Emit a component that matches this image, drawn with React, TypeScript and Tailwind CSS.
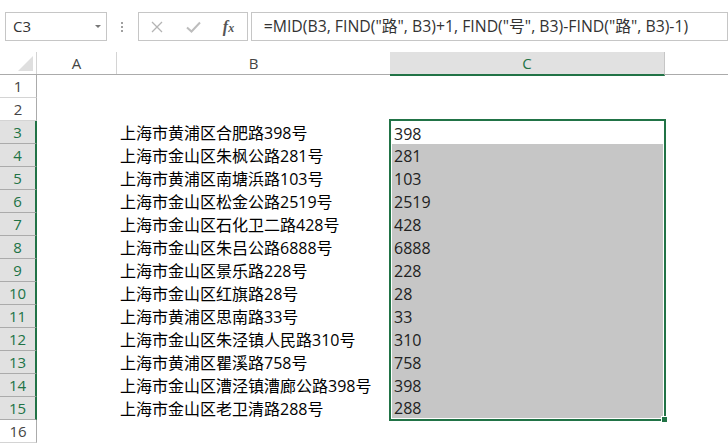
import React from "react";

const rows: { b: string; c: string }[] = [
  { b: "上海市黄浦区合肥路398号", c: "398" },
  { b: "上海市金山区朱枫公路281号", c: "281" },
  { b: "上海市黄浦区南塘浜路103号", c: "103" },
  { b: "上海市金山区松金公路2519号", c: "2519" },
  { b: "上海市金山区石化卫二路428号", c: "428" },
  { b: "上海市金山区朱吕公路6888号", c: "6888" },
  { b: "上海市金山区景乐路228号", c: "228" },
  { b: "上海市金山区红旗路28号", c: "28" },
  { b: "上海市黄浦区思南路33号", c: "33" },
  { b: "上海市金山区朱泾镇人民路310号", c: "310" },
  { b: "上海市黄浦区瞿溪路758号", c: "758" },
  { b: "上海市金山区漕泾镇漕廊公路398号", c: "398" },
  { b: "上海市金山区老卫清路288号", c: "288" },
];

const font = { fontFamily: '"Open Sans", "Noto Sans CJK SC", sans-serif' };

function RowHeader({ n, selected }: { n: number; selected: boolean }) {
  return (
    <div
      className={`w-[37px] h-full flex items-center justify-center border-b border-[#d4d4d4] text-[15px] ${
        selected
          ? "bg-[#e1e1e1] border-r-2 border-r-[#217346] text-[#217346] border-b-[#ababab]"
          : "bg-white border-r border-r-[#ababab] text-[#444]"
      }`}
    >
      {n}
    </div>
  );
}

export default function App() {
  const all = Array.from({ length: 16 }, (_, i) => i + 1);
  return (
    <div
      className="relative w-[728px] h-[445px] overflow-hidden bg-white text-[#222]"
      style={font}
    >
      {/* Formula bar */}
      <div className="flex items-center h-[52px] pt-[1px] pl-[5px]">
        <div className="w-[102px] h-[29px] border border-[#c6c6c6] flex items-center justify-between pl-[7px] pr-[5px] text-[15px] text-[#333]">
          <span>C3</span>
          <span className="w-0 h-0 border-l-[3px] border-r-[3px] border-t-[3px] border-l-transparent border-r-transparent border-t-[#777]" />
        </div>
        <div className="w-[31px] flex flex-col items-center gap-[2px]">
          <span className="w-[2px] h-[2px] bg-[#a0a0a0]" />
          <span className="w-[2px] h-[2px] bg-[#a0a0a0]" />
          <span className="w-[2px] h-[2px] bg-[#a0a0a0]" />
        </div>
        <div className="w-[110px] h-[29px] border border-[#c6c6c6] flex items-center">
          <svg width="12" height="12" viewBox="0 0 12 12" className="ml-[12px]">
            <path d="M1 1 L11 11 M11 1 L1 11" stroke="#b4b4b4" strokeWidth="1.3" fill="none" />
          </svg>
          <svg width="15" height="12" viewBox="0 0 15 12" className="ml-[23px]">
            <path d="M1 6.5 L5.5 10.5 L14 1.5" stroke="#bdbdbd" strokeWidth="2" fill="none" />
          </svg>
          <span
            className="ml-[22px] text-[16px] italic font-bold text-[#555] leading-none"
            style={{ fontFamily: '"Liberation Serif", serif' }}
          >
            f<span className="text-[12px]">x</span>
          </span>
        </div>
        <div className="ml-[3px] w-[478px] h-[29px] border border-[#c6c6c6] flex items-center pl-[12px] text-[15.8px] text-[#333] whitespace-nowrap">
          =MID(B3, FIND("路", B3)+1, FIND("号", B3)-FIND("路", B3)-1)
        </div>
      </div>

      {/* Column headers */}
      <div className="flex h-[23px] border-b border-[#ababab] text-[15px] text-[#444]">
        <div className="w-[37px] h-full border-r border-[#d4d4d4] relative">
          <svg width="16" height="16" viewBox="0 0 16 16" className="absolute left-[18px] top-[4px]">
            <path d="M15 0 L15 15 L0 15 Z" fill="#dfdfdf" />
          </svg>
        </div>
        <div className="w-[80px] h-full flex items-center justify-center border-r border-[#d4d4d4]">A</div>
        <div className="w-[273px] h-full flex items-center justify-center">B</div>
        <div className="w-[275px] h-[24px] flex items-center justify-center bg-[#e1e1e1] border-r border-[#c6c6c6] border-b-2 border-b-[#217346] text-[#217346]">
          C
        </div>
        <div className="flex-1" />
      </div>

      {/* Rows */}
      {all.map((n) => {
        const r = n >= 3 && n <= 15 ? rows[n - 3] : null;
        const sel = n >= 3 && n <= 15;
        return (
          <div key={n} className="flex h-[23px] text-[16px]">
            <RowHeader n={n} selected={sel} />
            <div className="w-[80px]" />
            <div className="w-[273px] flex items-center pl-[3px] text-black whitespace-nowrap">
              {r?.b}
            </div>
            <div className="w-[274px] h-full">
              {r && n === 3 && (
                <div className="h-full flex items-center pl-[4px] pt-[2px]">{r.c}</div>
              )}
              {r && n > 3 && (
                <div className={`h-full pl-[2px] pr-[1px] ${n === 15 ? "pb-[2px]" : ""}`}>
                  <div className="h-full bg-[#c6c6c6] flex items-center pl-[2px]">{r.c}</div>
                </div>
              )}
            </div>
          </div>
        );
      })}

      {/* Selection outline */}
      <div className="absolute left-[389px] top-[119px] w-[277px] h-[302px] border-2 border-[#217346] pointer-events-none" />
      <div className="absolute left-[661px] top-[416px] w-[7px] h-[7px] bg-[#217346] border border-white" />
    </div>
  );
}
